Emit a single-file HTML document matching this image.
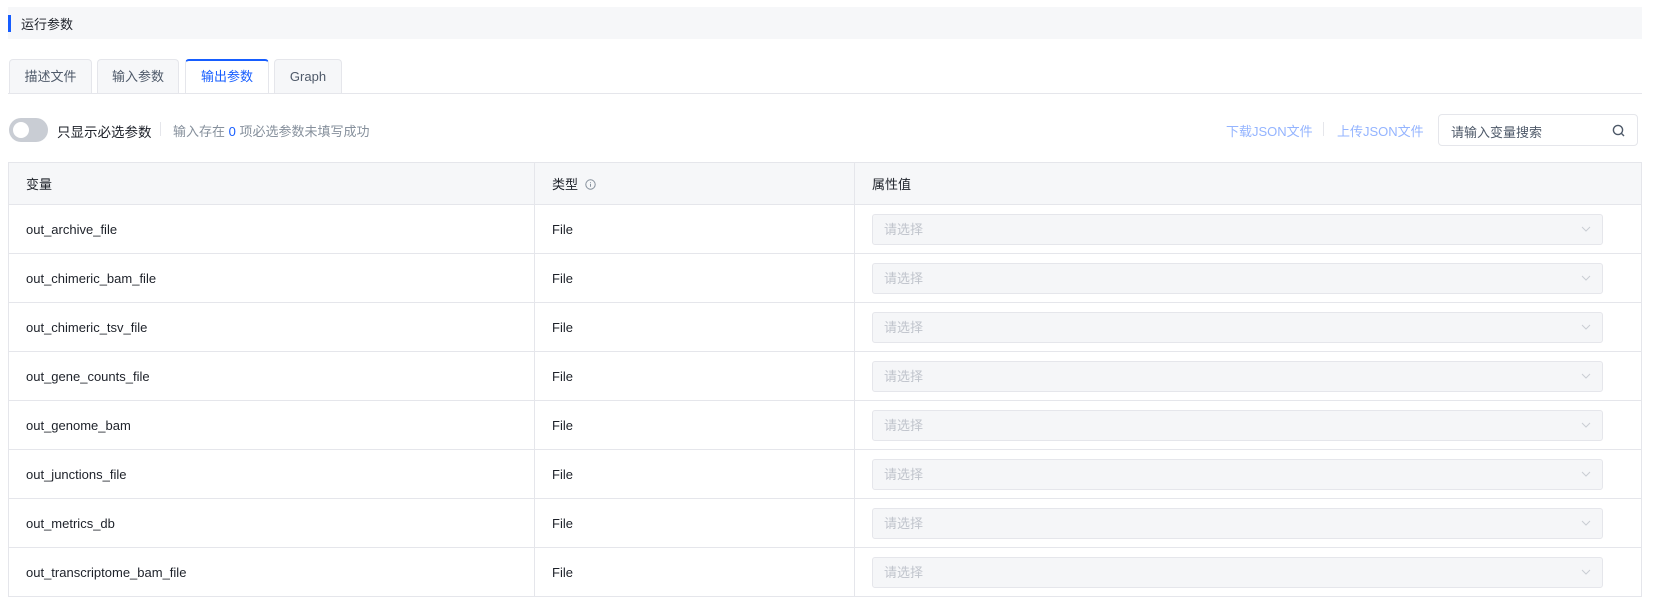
<!DOCTYPE html>
<html><head><meta charset="utf-8"><style>
*{box-sizing:border-box;margin:0;padding:0}
body{width:1656px;height:608px;background:#fff;font-family:"Liberation Sans","Noto Sans CJK SC",sans-serif;color:#1d2129;position:relative;overflow:hidden}
.abs{position:absolute}
.title{left:8px;top:7px;width:1634px;height:32px;background:#f6f7f9}
.title .bar{position:absolute;left:0;top:8px;width:3px;height:17px;background:#165dff}
.title span{position:absolute;left:13px;top:7px;font-size:13px}
.tabline{left:8px;top:93px;width:1634px;height:1px;background:#e5e6eb}
.tab{top:59px;height:35px;border:1px solid #e5e6eb;border-bottom:none;border-radius:4px 4px 0 0;background:#f6f7f9;font-size:13px;text-align:center;line-height:33px;color:#4e5969}
.tab.act{background:#fff;color:#165dff;border-top:2px solid #165dff;line-height:31px;height:35px}
.toggle{left:9px;top:118px;width:39px;height:24px;border-radius:12px;background:#c9cdd4}
.toggle i{position:absolute;left:4px;top:4px;width:16px;height:16px;border-radius:50%;background:#fff}
table{position:absolute;left:8px;top:162px;width:1634px;border-collapse:collapse;font-size:13px}
td,th{border:1px solid #e5e6eb;text-align:left;font-weight:normal;padding-left:17px}
th{height:42px;background:#f6f7f9}
td{height:49px}
.sel{width:731px;height:31px;background:#f5f6f8;border:1px solid #e5e6eb;border-radius:3px;color:#c0c4cc;font-size:13px;line-height:29px;padding-left:11px;position:relative}
.sel svg{position:absolute;right:11px;top:11px}
</style></head><body>
<div class="abs title"><div class="bar"></div><span>运行参数</span></div>
<div class="abs tab" style="left:9px;width:83px">描述文件</div>
<div class="abs tab" style="left:97px;width:82px">输入参数</div>
<div class="abs tab act" style="left:185px;width:84px">输出参数</div>
<div class="abs tab" style="left:274px;width:68px">Graph</div>
<div class="abs tabline"></div>
<div class="abs toggle"><i></i></div>
<div class="abs" style="left:57px;top:121px;font-size:13.5px">只显示必选参数</div>
<div class="abs" style="left:160px;top:122px;width:1px;height:14px;background:#e5e6eb"></div>
<div class="abs" style="left:173px;top:121px;font-size:13px;color:#86909c">输入存在 <span style="color:#165dff">0</span> 项必选参数未填写成功</div>
<div class="abs" style="left:1226px;top:121px;font-size:13px;color:#94b4ff">下载JSON文件</div>
<div class="abs" style="left:1323px;top:122px;width:1px;height:14px;background:#e5e6eb"></div>
<div class="abs" style="left:1337px;top:121px;font-size:13px;color:#94b4ff">上传JSON文件</div>
<div class="abs" style="left:1438px;top:114px;width:200px;height:32px;border:1px solid #e5e6eb;border-radius:4px;font-size:13px;color:#4e5969;padding:7px 0 0 12px">请输入变量搜索
<svg style="position:absolute;right:12px;top:9px" width="13" height="13" viewBox="0 0 13 13" fill="none" stroke="#4e5969" stroke-width="1.4"><circle cx="6" cy="6" r="4.6"/><path d="M9.4 9.4L12 12"/></svg></div>
<table>
<tr><th style="width:526px">变量</th><th style="width:320px">类型 <svg width="11" height="11" viewBox="0 0 11 11" style="vertical-align:-1px;margin-left:3px"><circle cx="5.5" cy="5.5" r="4.7" fill="none" stroke="#86909c"/><path d="M5.5 4.8v3M5.5 3v.8" stroke="#86909c"/></svg></th><th>属性值</th></tr>
<tr><td>out_archive_file</td><td>File</td><td><div class="sel">请选择<svg width="10" height="6"><path d="M1 1l4 4 4-4" fill="none" stroke="#c9cdd4"/></svg></div></td></tr>
<tr><td>out_chimeric_bam_file</td><td>File</td><td><div class="sel">请选择<svg width="10" height="6"><path d="M1 1l4 4 4-4" fill="none" stroke="#c9cdd4"/></svg></div></td></tr>
<tr><td>out_chimeric_tsv_file</td><td>File</td><td><div class="sel">请选择<svg width="10" height="6"><path d="M1 1l4 4 4-4" fill="none" stroke="#c9cdd4"/></svg></div></td></tr>
<tr><td>out_gene_counts_file</td><td>File</td><td><div class="sel">请选择<svg width="10" height="6"><path d="M1 1l4 4 4-4" fill="none" stroke="#c9cdd4"/></svg></div></td></tr>
<tr><td>out_genome_bam</td><td>File</td><td><div class="sel">请选择<svg width="10" height="6"><path d="M1 1l4 4 4-4" fill="none" stroke="#c9cdd4"/></svg></div></td></tr>
<tr><td>out_junctions_file</td><td>File</td><td><div class="sel">请选择<svg width="10" height="6"><path d="M1 1l4 4 4-4" fill="none" stroke="#c9cdd4"/></svg></div></td></tr>
<tr><td>out_metrics_db</td><td>File</td><td><div class="sel">请选择<svg width="10" height="6"><path d="M1 1l4 4 4-4" fill="none" stroke="#c9cdd4"/></svg></div></td></tr>
<tr><td>out_transcriptome_bam_file</td><td>File</td><td><div class="sel">请选择<svg width="10" height="6"><path d="M1 1l4 4 4-4" fill="none" stroke="#c9cdd4"/></svg></div></td></tr>
</table>
</body></html>
